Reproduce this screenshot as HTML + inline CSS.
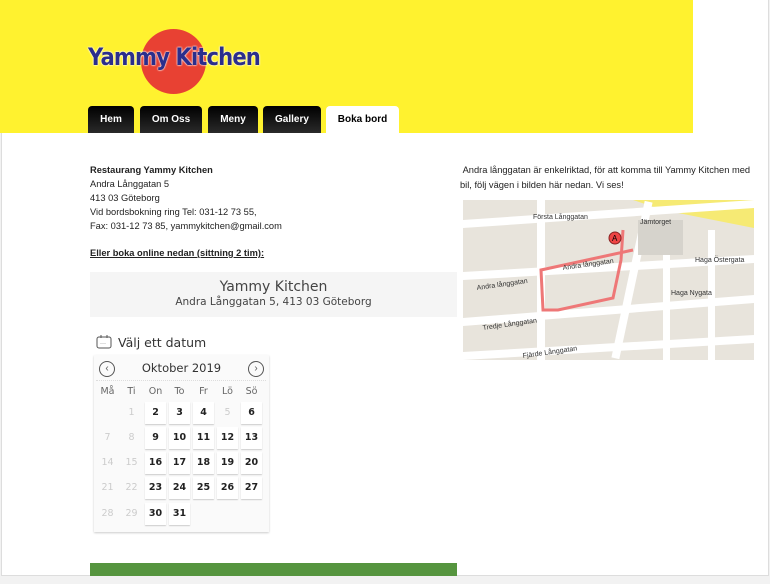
<!DOCTYPE html>
<html><head><meta charset="utf-8"><style>
*{margin:0;padding:0;box-sizing:border-box}
body{width:770px;height:584px;background:#f2f2f2;font-family:"Liberation Sans",sans-serif;position:relative;overflow:hidden}
.page{position:absolute;left:1px;top:0;width:768px;height:576px;background:#fff;border:1px solid #ddd;border-top:none}
.hdr{position:absolute;left:0;top:0;width:693px;height:133px;background:#fff22f}
.circle{position:absolute;left:141px;top:29px;width:65px;height:65px;border-radius:50%;background:#e84133}
.logo{position:absolute;left:88px;top:43px;font-family:"DejaVu Sans",sans-serif;font-weight:bold;font-size:24px;color:#2b2e8c;letter-spacing:-1px;transform:scaleX(0.88);transform-origin:left;text-shadow:0 0 2px #fff,0 0 2px #fff}
.tab{position:absolute;top:106px;height:27px;border-radius:4px 4px 0 0;background:linear-gradient(#000,#2a2a2a);color:#fff;font-weight:bold;font-size:10px;text-align:center;line-height:27px}
.t{position:absolute;font-size:9.3px;color:#222;line-height:14px}
.box{position:absolute;left:90px;top:272px;width:367px;height:45px;background:#f5f5f5;text-align:center;color:#444;font-family:"DejaVu Sans",sans-serif}
.cal{position:absolute;left:94px;top:355px;width:175px;height:177px;background:#fafafa;box-shadow:0 1px 2px #ccc}
.c{position:absolute;width:21px;height:22px;font-size:9.5px;text-align:center;line-height:22px;font-family:"DejaVu Sans",sans-serif}
.w{background:#fff;box-shadow:0 1px 1px #ccc;color:#222;font-weight:bold}
.g{color:#ccc}
.h{color:#666}
.arr{position:absolute;top:361px;width:16px;height:16px;border:1px solid #555;border-radius:50%;font-size:10px;line-height:13px;text-align:center;color:#555}
</style></head><body>
<div class="page"></div>
<div class="hdr"></div>
<div class="circle"></div>
<div class="logo">Yammy Kitchen</div>
<div class="tab" style="left:88px;width:46px">Hem</div>
<div class="tab" style="left:140px;width:62px">Om Oss</div>
<div class="tab" style="left:208px;width:50px">Meny</div>
<div class="tab" style="left:263px;width:58px">Gallery</div>
<div class="tab" style="left:326px;width:73px;background:#fff;color:#000">Boka bord</div>

<div class="t" style="left:90px;top:163px"><b>Restaurang Yammy Kitchen</b><br>Andra Långgatan 5<br>413 03 Göteborg<br>Vid bordsbokning ring Tel: 031-12 73 55,<br>Fax: 031-12 73 85, yammykitchen@gmail.com</div>
<div class="t" style="left:90px;top:246px;font-weight:bold;text-decoration:underline">Eller boka online nedan (sittning 2 tim):</div>
<div class="t" style="left:460px;top:163px;width:302px;line-height:15px">&nbsp;Andra långgatan är enkelriktad, för att komma till Yammy Kitchen med bil, följ vägen i bilden här nedan. Vi ses!</div>

<div class="box"><div style="font-size:14px;padding-top:7px;line-height:17px">Yammy Kitchen</div><div style="font-size:10.5px;line-height:13px">Andra Långgatan 5, 413 03 Göteborg</div></div>

<svg style="position:absolute;left:96px;top:334px" width="17" height="16"><rect x="1" y="3" width="14" height="11" rx="2" fill="none" stroke="#555"/><line x1="5" y1="1" x2="5" y2="4" stroke="#555"/><line x1="11" y1="1" x2="11" y2="4" stroke="#555"/><text x="4" y="11" font-size="6" fill="#555">···</text></svg>
<div style="position:absolute;left:118px;top:335px;font-size:12.5px;color:#333;font-family:'DejaVu Sans',sans-serif">Välj ett datum</div>
<div class="cal"></div>
<div class="arr" style="left:99px">‹</div>
<div class="arr" style="left:248px">›</div>
<div style="position:absolute;left:94px;top:361px;width:175px;text-align:center;font-size:11.5px;color:#333;font-family:'DejaVu Sans',sans-serif">Oktober 2019</div>
<div style="position:absolute;left:96px;top:380px;width:170px;border-top:1px dotted #ddd"></div>
<div id="days"></div>

<svg style="position:absolute;left:463px;top:200px" width="291" height="160" viewBox="0 0 291 160">
<rect width="291" height="160" fill="#e8e4dc"/>
<polygon points="170,0 291,0 291,28 200,10" fill="#f6ea74"/>
<g fill="#fff">
<polygon points="0,20 291,0 291,8 0,28"/><polygon points="0,72 291,55 291,63 0,80"/>
<polygon points="0,118 291,95 291,103 0,126"/><polygon points="0,152 291,135 291,143 0,160"/>
<rect x="74" y="0" width="8" height="160"/><rect x="165" y="0" width="8" height="160" transform="rotate(12 169 80)"/>
<rect x="200" y="40" width="7" height="120"/><rect x="245" y="30" width="7" height="130"/>
</g>
<rect x="175" y="20" width="45" height="35" fill="#d6d3cc"/>
<polyline points="160,30 158,60 150,98 95,110 80,110 78,70 170,50" fill="none" stroke="#e77" stroke-width="3"/>
<circle cx="152" cy="38" r="6" fill="#e44" stroke="#822"/><text x="149" y="41" font-size="8" fill="#000">A</text>
<g font-size="7" fill="#333" font-family="Liberation Sans"><text x="70" y="19">Första Långgatan</text><text x="177" y="24">Jämtorget</text><text x="100" y="70" transform="rotate(-8 100 70)">Andra långgatan</text><text x="14" y="90" transform="rotate(-8 14 90)">Andra långgatan</text><text x="20" y="130" transform="rotate(-8 20 130)">Tredje Långgatan</text><text x="60" y="158" transform="rotate(-8 60 158)">Fjärde Långgatan</text><text x="232" y="62">Haga Östergata</text><text x="208" y="95">Haga Nygata</text></g>
</svg>

<div style="position:absolute;left:90px;top:563px;width:367px;height:13px;background:#56953f"></div>
<script>
var d=document.getElementById('days'),h=['Må','Ti','On','To','Fr','Lö','Sö'],s='';
h.forEach(function(x,i){s+='<div class="c h" style="left:'+(97+i*24)+'px;top:381px">'+x+'</div>'});
var rows=[402,427,452,477,503];
for(var r=0;r<5;r++)for(var c=0;c<7;c++){var day=r*7+c;if(day<1||day>31)continue;
var grey=(c<2)||day==5;s+='<div class="c '+(grey?'g':'w')+'" style="left:'+(97+c*24)+'px;top:'+rows[r]+'px">'+day+'</div>';}
d.innerHTML=s;
</script>
</body></html>
